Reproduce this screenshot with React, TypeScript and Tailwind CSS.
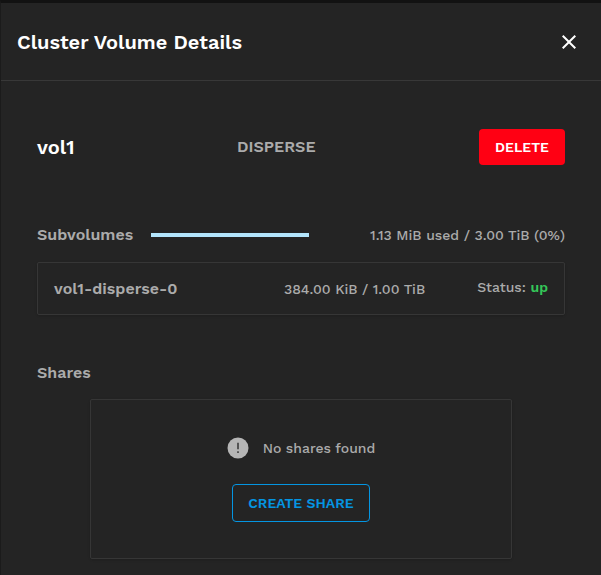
import React from "react";
import { MdClose } from "react-icons/md";

function DialogHeader() {
  return (
    <header className="flex h-[78px] items-center justify-between border-b border-[#383838] px-4">
      <h1 className="text-xl font-semibold text-white">Cluster Volume Details</h1>
      <button type="button" aria-label="Close" className="flex size-8 items-center justify-center text-white">
        <MdClose className="size-6" />
      </button>
    </header>
  );
}

function VolumeSummary() {
  return (
    <section className="grid h-9 grid-cols-3 items-center">
      <h2 className="text-xl font-semibold text-white">vol1</h2>
      <p className="pl-6 font-semibold">DISPERSE</p>
      <button
        type="button"
        className="h-9 w-[86px] justify-self-end rounded bg-[#ff0013] text-sm font-semibold text-white"
      >
        DELETE
      </button>
    </section>
  );
}

function Subvolumes() {
  return (
    <section className="mt-[58px]">
      <div className="flex h-6 items-center">
        <h3 className="w-[114px] font-semibold">Subvolumes</h3>
        <div role="progressbar" aria-label="Space used" aria-valuenow={0} className="h-1 w-[30%] bg-[#b3e5fc]" />
        <p className="ml-auto text-sm font-medium">1.13 MiB used / 3.00 TiB (0%)</p>
      </div>
      <div className="mt-[15px] flex h-[53px] items-center justify-between rounded-xs border border-[#363636] px-4 shadow-sm">
        <p className="w-[230px] font-semibold">vol1-disperse-0</p>
        <p className="flex-1 text-sm font-medium">384.00 KiB / 1.00 TiB</p>
        <p className="pb-1 text-sm font-medium">
          Status: <span className="font-semibold text-[#34c759]">up</span>
        </p>
      </div>
    </section>
  );
}

function NoticeIcon() {
  return (
    <svg viewBox="0 0 22 22" className="size-[22px]" aria-hidden="true">
      <circle cx="11" cy="11" r="10.5" fill="#b5b5b5" />
      <path d="M10.1 5.8h1.8v6.4h-1.8zM10.1 14.2h1.8V16h-1.8z" fill="#4a4a4a" />
    </svg>
  );
}

function Shares() {
  return (
    <section className="mt-[46px]">
      <h3 className="font-semibold">Shares</h3>
      <div className="mx-auto mt-3.5 flex w-4/5 flex-col items-center rounded-xs border border-[#363636] py-9 shadow-sm">
        <div className="flex h-6 items-center gap-3.5">
          <NoticeIcon />
          <p className="text-sm font-medium">No shares found</p>
        </div>
        <button
          type="button"
          className="mt-6 h-[38px] w-[138px] rounded border border-[#0495e2] text-sm font-semibold text-[#0495e2]"
        >
          CREATE SHARE
        </button>
      </div>
    </section>
  );
}

export default function App() {
  return (
    <div className="min-h-screen border-t-3 border-l border-t-[#121212] border-l-[#1b1b1b] bg-[#242424] font-['Work_Sans',Inter,sans-serif] text-[#ababab]">
      <DialogHeader />
      <main className="px-9 pt-12 pb-4">
        <VolumeSummary />
        <Subvolumes />
        <Shares />
      </main>
    </div>
  );
}
